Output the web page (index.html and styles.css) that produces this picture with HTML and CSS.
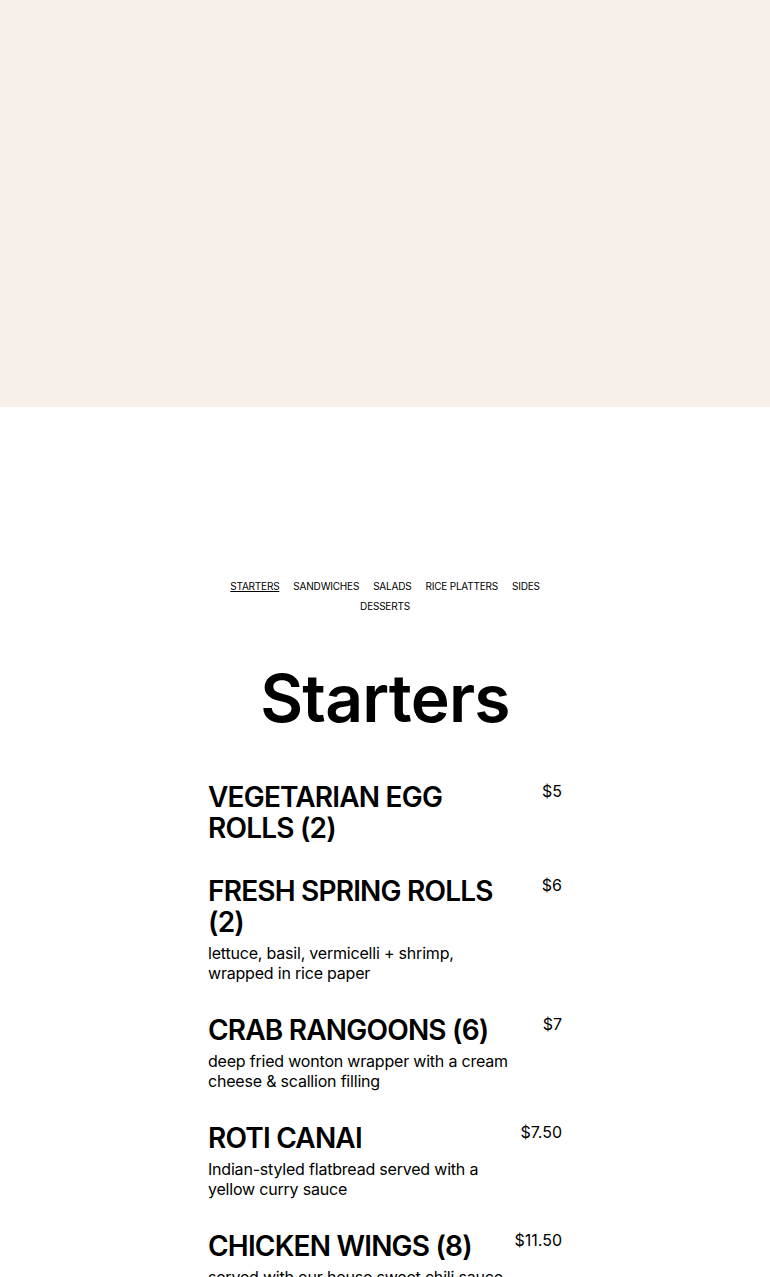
FILE: index.html
```html
<!DOCTYPE html>
<html lang="en">
<head>
<meta charset="utf-8">
<title>Menu — Starters</title>
<link rel="stylesheet" href="styles.css">
</head>
<body>
<header class="banner"></header>
<main class="menu">
  <nav class="menu-nav">
    <a class="nav-link active" href="#">STARTERS</a>
    <a class="nav-link" href="#">SANDWICHES</a>
    <a class="nav-link" href="#">SALADS</a>
    <a class="nav-link" href="#">RICE PLATTERS</a>
    <a class="nav-link" href="#">SIDES</a>
    <a class="nav-link" href="#">DESSERTS</a>
  </nav>
  <h1 class="section-title">Starters</h1>
  <ul class="items">
    <li class="item">
      <div class="item-body">
        <h2 class="item-name">VEGETARIAN EGG ROLLS (2)</h2>
      </div>
      <span class="item-price">$5</span>
    </li>
    <li class="item">
      <div class="item-body">
        <h2 class="item-name">FRESH SPRING ROLLS (2)</h2>
        <p class="item-desc">lettuce, basil, vermicelli + shrimp, wrapped in rice paper</p>
      </div>
      <span class="item-price">$6</span>
    </li>
    <li class="item">
      <div class="item-body">
        <h2 class="item-name">CRAB RANGOONS (6)</h2>
        <p class="item-desc">deep fried wonton wrapper with a cream cheese &amp; scallion filling</p>
      </div>
      <span class="item-price">$7</span>
    </li>
    <li class="item">
      <div class="item-body">
        <h2 class="item-name">ROTI CANAI</h2>
        <p class="item-desc">Indian-styled flatbread served with a yellow curry sauce</p>
      </div>
      <span class="item-price">$7.50</span>
    </li>
    <li class="item">
      <div class="item-body">
        <h2 class="item-name">CHICKEN WINGS (8)</h2>
        <p class="item-desc">served with our house sweet chili sauce</p>
      </div>
      <span class="item-price">$11.50</span>
    </li>
  </ul>
</main>
</body>
</html>
```
FILE: styles.css
```css
* { box-sizing: border-box; }
html, body { margin: 0; padding: 0; background: #ffffff; }
body {
  font-family: Inter, "Liberation Sans", sans-serif;
  color: #000;
}
.banner {
  height: 407px;
  background: #f7efea;
}
.menu {
  width: 354px;
  margin: 0 auto;
  padding-top: 169px;
}
.menu-nav {
  display: flex;
  flex-wrap: wrap;
  justify-content: center;
  column-gap: 14px;
  font-size: 10px;
  line-height: 20px;
  letter-spacing: -0.2px;
}
.nav-link {
  color: #000;
  text-decoration: none;
}
.nav-link.active { text-decoration: underline; }
.section-title {
  margin: 42px 0 0;
  text-align: center;
  font-size: 66px;
  font-weight: 600;
  line-height: 80px;
  letter-spacing: -0.8px;
}
.items {
  list-style: none;
  margin: 44px 0 0;
  padding: 0;
}
.item {
  display: flex;
  justify-content: space-between;
  align-items: flex-start;
  margin-bottom: 32px;
}
.item-body { width: 305px; }
.item-name {
  margin: 0;
  font-size: 28px;
  font-weight: 600;
  line-height: 31px;
  letter-spacing: -0.8px;
}
.item-desc {
  margin: 5px 0 0;
  font-size: 16px;
  line-height: 20px;
  letter-spacing: -0.2px;
}
.item-price {
  font-size: 16px;
  line-height: 18px;
  white-space: nowrap;
}
```
